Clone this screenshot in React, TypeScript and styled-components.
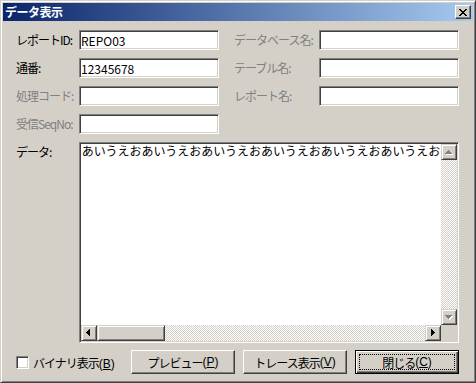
import { Fragment } from "react";
import styled, { createGlobalStyle } from "styled-components";

const GlobalStyle = createGlobalStyle`
  html, body {
    margin: 0;
    padding: 0;
    background: #d4d0c8;
  }
  body {
    font-family: "Noto Sans CJK JP", "Liberation Sans", sans-serif;
    font-size: 12px;
  }
`;

const FACE = "#d4d0c8";

const Window = styled.div`
  width: 476px;
  height: 383px;
  box-sizing: border-box;
  background: ${FACE};
  border: 1px solid;
  border-color: ${FACE} #404040 #404040 ${FACE};
  box-shadow: inset 1px 1px #fff, inset -1px -1px #808080;
  padding: 2px;
  display: flex;
  flex-direction: column;
`;

const TitleBar = styled.div`
  height: 18px;
  display: flex;
  align-items: center;
  justify-content: space-between;
  background: linear-gradient(to right, #0a246a, #a6caf0);
  padding: 0 2px;
`;

const Title = styled.div`
  color: #fff;
  font-weight: bold;
  font-size: 12px;
  line-height: 18px;
  letter-spacing: -0.5px;
`;

const CloseButton = styled.div`
  width: 16px;
  height: 14px;
  box-sizing: border-box;
  background: ${FACE};
  border: 1px solid;
  border-color: #fff #404040 #404040 #fff;
  box-shadow: inset -1px -1px #808080;
  display: flex;
  align-items: center;
  justify-content: center;
`;

const Client = styled.div`
  flex: 1;
  display: flex;
  flex-direction: column;
  padding: 9px 14px 0 13px;
`;

const FormGrid = styled.div`
  display: grid;
  grid-template-columns: 63px 140px 100px 140px;
  grid-auto-rows: 20px;
  row-gap: 8px;
  align-items: center;
`;

const Label = styled.div<{ $disabled?: boolean; $right?: boolean }>`
  color: ${(p) => (p.$disabled ? "#808080" : "#000")};
  font-size: 12px;
  line-height: 14px;
  letter-spacing: -1px;
  white-space: nowrap;
  padding-left: ${(p) => (p.$right ? "15px" : "0")};
`;

const TextField = styled.input`
  box-sizing: border-box;
  width: 140px;
  height: 20px;
  margin: 0;
  padding: 0 1px;
  border: 1px solid;
  border-color: #808080 #fff #fff #808080;
  box-shadow: inset 1px 1px #404040, inset -1px -1px ${FACE};
  background: #fff;
  color: #000;
  font-family: inherit;
  font-size: 12px;
  outline: none;
`;

const DataRow = styled.div`
  display: flex;
  margin-top: 8px;
`;

const DataLabel = styled(Label)`
  width: 63px;
  padding-top: 3px;
`;

const DataBox = styled.div`
  width: 382px;
  height: 201px;
  box-sizing: border-box;
  border: 1px solid;
  border-color: #808080 #fff #fff #808080;
  box-shadow: inset 1px 1px #404040, inset -1px -1px ${FACE};
  padding: 1px;
  background: #fff;
  display: grid;
  grid-template-columns: 1fr 16px;
  grid-template-rows: 1fr 16px;
`;

const DataText = styled.div`
  overflow: hidden;
  white-space: nowrap;
  font-size: 12px;
  line-height: 14px;
  padding: 0 0 0 1px;
  letter-spacing: -0.05px;
  color: #000;
`;

const checker = `
  background-color: ${FACE};
  background-image: conic-gradient(#fff 25%, ${FACE} 0 50%, #fff 0 75%, ${FACE} 0);
  background-size: 2px 2px;
`;

const VScroll = styled.div`
  display: flex;
  flex-direction: column;
`;

const HScroll = styled.div`
  display: flex;
`;

const Track = styled.div`
  flex: 1;
  ${checker}
`;

const Corner = styled.div`
  background: ${FACE};
`;

const ScrollButton = styled.div<{ $w?: number }>`
  width: ${(p) => p.$w ?? 16}px;
  height: 16px;
  flex: none;
  box-sizing: border-box;
  background: ${FACE};
  border: 1px solid;
  border-color: ${FACE} #404040 #404040 ${FACE};
  box-shadow: inset 1px 1px #fff, inset -1px -1px #808080;
  display: flex;
  align-items: center;
  justify-content: center;
`;

const BottomRow = styled.div`
  display: flex;
  align-items: center;
  margin-top: 7px;
`;

const CheckGroup = styled.label`
  display: flex;
  align-items: center;
  gap: 4px;
  font-size: 12px;
  letter-spacing: -1px;
  color: #000;
`;

const CheckBox = styled.span`
  width: 13px;
  height: 13px;
  box-sizing: border-box;
  border: 1px solid;
  border-color: #808080 #fff #fff #808080;
  box-shadow: inset 1px 1px #404040, inset -1px -1px ${FACE};
  background: #fff;
`;

const Buttons = styled.div`
  margin-left: auto;
  display: flex;
  gap: 8px;
`;

const Button = styled.div<{ $default?: boolean }>`
  width: 104px;
  height: 24px;
  box-sizing: border-box;
  background: ${FACE};
  display: flex;
  font-size: 12px;
  letter-spacing: -1px;
  color: #000;
  border: 1px solid;
  border-color: ${(p) => (p.$default ? "#000" : "#fff #404040 #404040 #fff")};
  box-shadow: ${(p) =>
    p.$default
      ? "inset 1px 1px #fff, inset -1px -1px #404040, inset -2px -2px #808080"
      : "inset -1px -1px #808080"};
  padding: ${(p) => (p.$default ? "3px" : "0")};
`;

const ButtonFace = styled.span<{ $focus?: boolean }>`
  flex: 1;
  display: flex;
  align-items: center;
  justify-content: center;
  white-space: pre;
  border: 1px dotted ${(p) => (p.$focus ? "#000" : "transparent")};
`;

const Accel = styled.span`
  font-family: "Liberation Sans", sans-serif;
  letter-spacing: 0;
`;

const Key = styled.span`
  text-decoration: underline;
  text-underline-offset: 1px;
`;

const Mnemonic = ({ k }: { k: string }) => (
  <Accel>
    (<Key>{k}</Key>)
  </Accel>
);

type Dir = "up" | "down" | "left" | "right";

const Arrow = ({ dir, disabled }: { dir: Dir; disabled?: boolean }) => {
  const rows = [0, 1, 2, 3];
  const rects = (fill: string, off: number) =>
    rows.map((i) => {
      const len = 2 * i + 1;
      const s = 3 - i;
      let x = 0, y = 0, w = 1, h = 1;
      if (dir === "up") { x = s; y = i; w = len; }
      if (dir === "down") { x = s; y = 3 - i; w = len; }
      if (dir === "left") { x = i; y = s; h = len; }
      if (dir === "right") { x = 3 - i; y = s; h = len; }
      return <rect key={fill + i} x={x + off} y={y + off} width={w} height={h} fill={fill} />;
    });
  const vertical = dir === "up" || dir === "down";
  return (
    <svg width={vertical ? 8 : 5} height={vertical ? 5 : 8} shapeRendering="crispEdges">
      {disabled && rects("#fff", 1)}
      {rects(disabled ? "#808080" : "#000", 0)}
    </svg>
  );
};

const CloseGlyph = () => {
  const px = [
    "11....11",
    ".11..11.",
    "..1111..",
    "...11...",
    "..1111..",
    ".11..11.",
    "11....11",
  ];
  return (
    <svg width="8" height="7" shapeRendering="crispEdges">
      {px.flatMap((row, y) =>
        row.split("").map((c, x) =>
          c === "1" ? <rect key={`${x}-${y}`} x={x} y={y} width="1" height="1" fill="#000" /> : null
        )
      )}
    </svg>
  );
};

const fields = [
  { left: "レポートID:", value: "REPO03", leftOff: false, right: "データベース名:" },
  { left: "通番:", value: "12345678", leftOff: false, right: "テーブル名:" },
  { left: "処理コード:", value: "", leftOff: true, right: "レポート名:" },
  { left: "受信SeqNo:", value: "", leftOff: true, right: "" },
];

const App = () => {
  return (
    <>
      <GlobalStyle />
      <Window>
        <TitleBar>
          <Title>データ表示</Title>
          <CloseButton>
            <CloseGlyph />
          </CloseButton>
        </TitleBar>
        <Client>
          <FormGrid>
            {fields.map((f) => (
              <Fragment key={f.left}>
                <Label $disabled={f.leftOff}>{f.left}</Label>
                <TextField readOnly value={f.value} />
                {f.right ? (
                  <>
                    <Label $disabled $right>{f.right}</Label>
                    <TextField readOnly value="" />
                  </>
                ) : (
                  <>
                    <span />
                    <span />
                  </>
                )}
              </Fragment>
            ))}
          </FormGrid>
          <DataRow>
            <DataLabel>データ:</DataLabel>
            <DataBox>
              <DataText>{"あいうえお".repeat(6)}</DataText>
              <VScroll>
                <ScrollButton><Arrow dir="up" disabled /></ScrollButton>
                <Track />
                <ScrollButton><Arrow dir="down" disabled /></ScrollButton>
              </VScroll>
              <HScroll>
                <ScrollButton><Arrow dir="left" /></ScrollButton>
                <ScrollButton $w={68} />
                <Track />
                <ScrollButton><Arrow dir="right" /></ScrollButton>
              </HScroll>
              <Corner />
            </DataBox>
          </DataRow>
          <BottomRow>
            <CheckGroup>
              <CheckBox />
              <span>バイナリ表示<Mnemonic k="B" /></span>
            </CheckGroup>
            <Buttons>
              <Button><ButtonFace>プレビュー<Mnemonic k="P" /></ButtonFace></Button>
              <Button><ButtonFace>トレース表示<Mnemonic k="V" /></ButtonFace></Button>
              <Button $default><ButtonFace $focus>閉じる<Mnemonic k="C" /></ButtonFace></Button>
            </Buttons>
          </BottomRow>
        </Client>
      </Window>
    </>
  );
};

export default App;
